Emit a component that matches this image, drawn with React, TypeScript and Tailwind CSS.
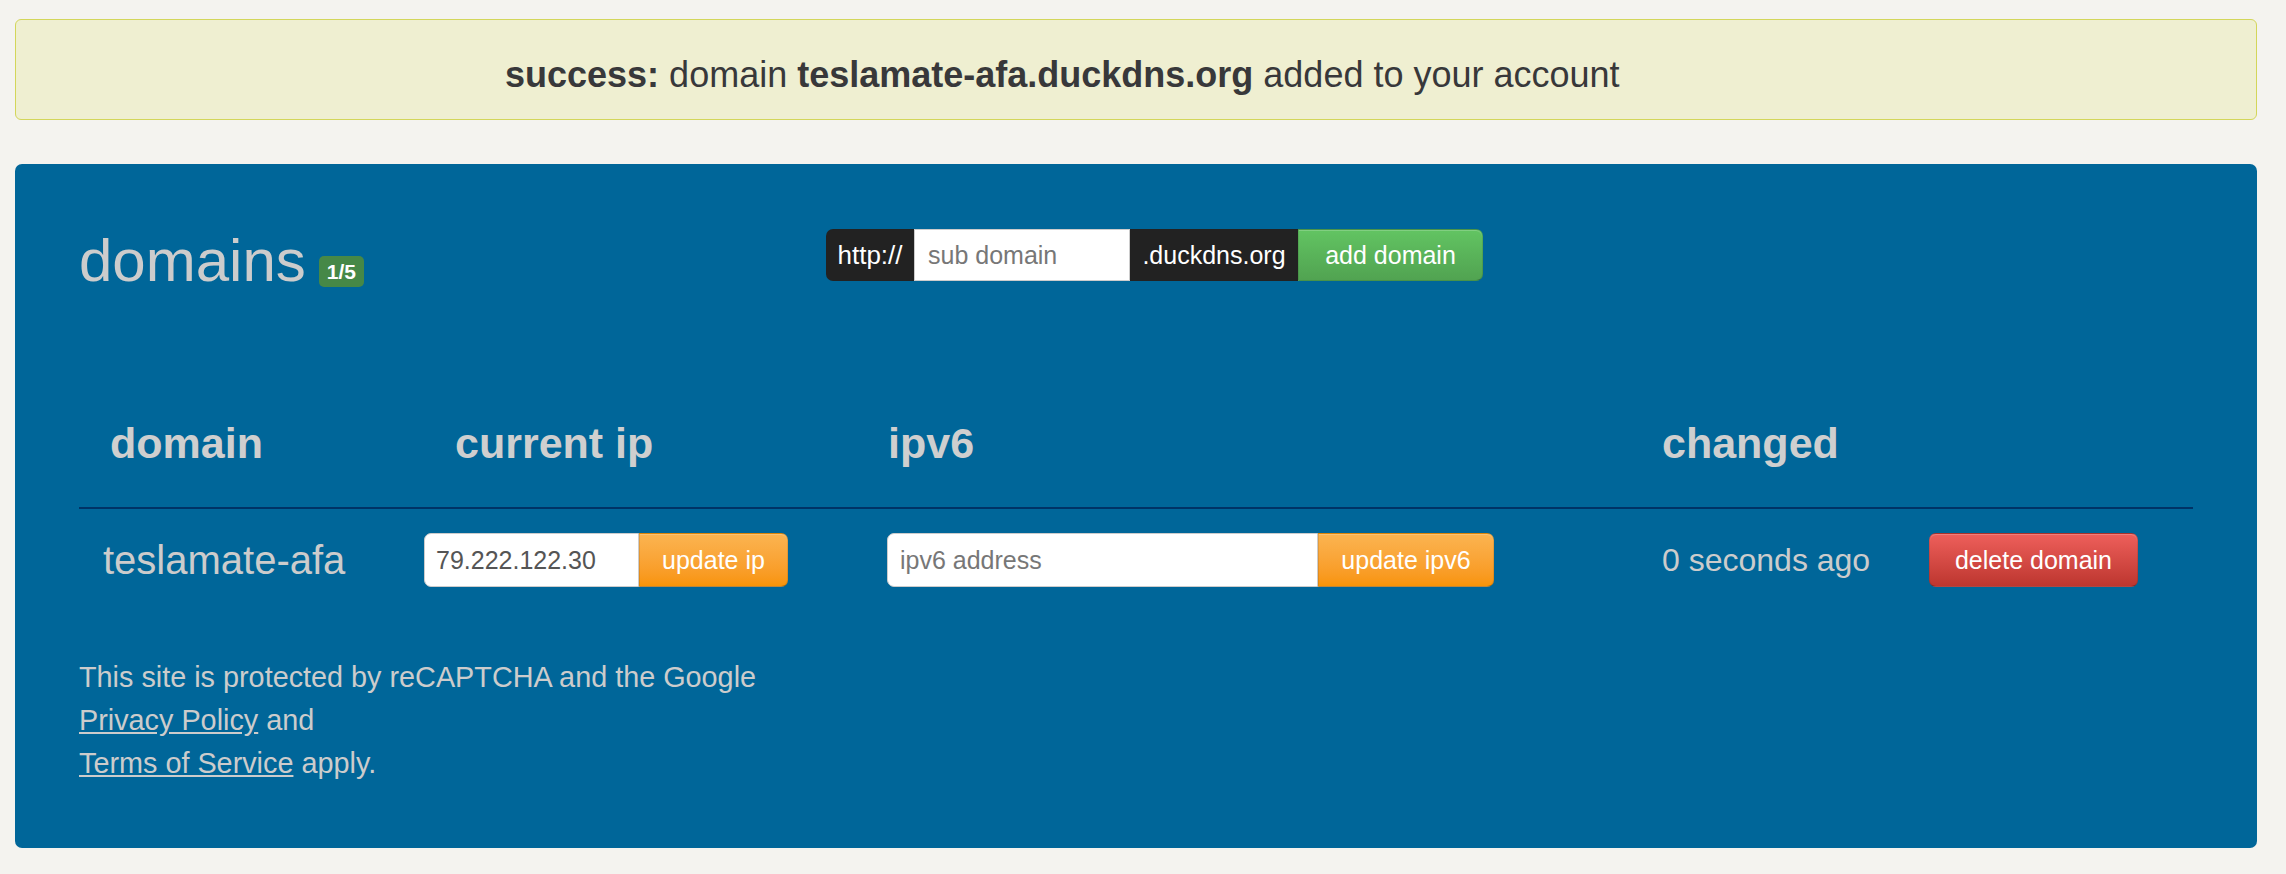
import React from "react";

export default function App() {
  return (
    <div className="w-full min-h-[874px] bg-[#f4f3ef] pl-[15px] pr-[29px] pt-[19px] pb-[26px] font-['Liberation_Sans',Arial,sans-serif]">
      {/* alert */}
      <div className="box-border h-[101px] rounded-[6px] border border-[#d3d65a] bg-[#efefd1] pl-[489px] pt-[37px] text-[36px] leading-none text-[#38383a]">
        <b>success:</b> domain <b>teslamate-afa.duckdns.org</b> added to your account
      </div>

      {/* panel */}
      <div className="mt-[44px] rounded-[7px] bg-[#006699] px-[64px] pt-[65px] pb-[62px] text-[#cccccc]">
        {/* top row */}
        <div className="flex h-[52px] items-start">
          <div className="flex w-[747px] items-start">
            <span className="mt-[2px] text-[60px] leading-none">domains</span>
            <span className="ml-[13px] mt-[27px] flex h-[31px] items-center rounded-[5px] bg-[#468847] px-[8px] text-[21px] font-bold leading-none text-white">
              1/5
            </span>
          </div>
          <div className="flex h-[52px] text-[25px] leading-none">
            <div className="flex w-[88px] items-center justify-center rounded-l-[7px] bg-[#222222] text-[26px] text-white">
              http://
            </div>
            <input
              readOnly
              placeholder="sub domain"
              className="box-border h-[52px] w-[216px] border border-[#cccccc] bg-white pl-[13px] text-[25px] text-[#555] outline-none placeholder:text-[#777]"
            />
            <div className="flex w-[168px] items-center justify-center bg-[#222222] text-white">
              .duckdns.org
            </div>
            <button className="box-border flex w-[185px] items-center justify-center rounded-r-[7px] border border-black/10 border-b-black/25 bg-linear-to-b from-[#62c462] to-[#51a351] text-white shadow-[inset_0_1px_0_rgba(255,255,255,0.2)]">
              add domain
            </button>
          </div>
        </div>

        {/* table header */}
        <div className="mt-[141px] box-border grid h-[87px] grid-cols-[345px_463px_775px_1fr] border-b-2 border-[#003366] text-[43px] font-bold leading-none text-[#cfcfcf]">
          <div className="pl-[31px]">domain</div>
          <div className="pl-[31px]">current ip</div>
          <div className="pl-[1px]">ipv6</div>
          <div>changed</div>
        </div>

        {/* table row */}
        <div className="mt-[24px] grid h-[54px] grid-cols-[345px_463px_775px_1fr] items-center">
          <div className="pl-[24px] text-[40px] leading-none">teslamate-afa</div>
          <div className="flex h-[54px]">
            <input
              readOnly
              defaultValue="79.222.122.30"
              className="box-border h-[54px] w-[215px] rounded-l-[7px] border border-[#cccccc] bg-white pl-[11px] text-[25px] text-[#555] outline-none"
            />
            <button className="box-border flex w-[149px] items-center justify-center rounded-r-[7px] border border-black/10 border-b-black/25 bg-linear-to-b from-[#fbb450] to-[#f89406] text-[25px] leading-none text-white shadow-[inset_0_1px_0_rgba(255,255,255,0.2)]">
              update ip
            </button>
          </div>
          <div className="flex h-[54px]">
            <input
              readOnly
              placeholder="ipv6 address"
              className="box-border h-[54px] w-[431px] rounded-l-[7px] border border-[#cccccc] bg-white pl-[12px] text-[25px] text-[#555] outline-none placeholder:text-[#777]"
            />
            <button className="box-border flex w-[176px] items-center justify-center rounded-r-[7px] border border-black/10 border-b-black/25 bg-linear-to-b from-[#fbb450] to-[#f89406] text-[25px] leading-none text-white shadow-[inset_0_1px_0_rgba(255,255,255,0.2)]">
              update ipv6
            </button>
          </div>
          <div className="flex items-center">
            <span className="w-[267px] text-[32px] leading-none">0 seconds ago</span>
            <button className="box-border flex h-[54px] w-[209px] items-center justify-center rounded-[7px] border border-black/10 border-b-black/25 bg-linear-to-b from-[#ee5f5b] to-[#bd362f] text-[25px] leading-none text-white shadow-[inset_0_1px_0_rgba(255,255,255,0.2)]">
              delete domain
            </button>
          </div>
        </div>

        {/* footer */}
        <div className="mt-[69px] text-[28.8px] leading-[43.2px] text-[#cccccc]">
          This site is protected by reCAPTCHA and the Google
          <br />
          <a className="underline">Privacy Policy</a> and
          <br />
          <a className="underline">Terms of Service</a> apply.
        </div>
      </div>
    </div>
  );
}
